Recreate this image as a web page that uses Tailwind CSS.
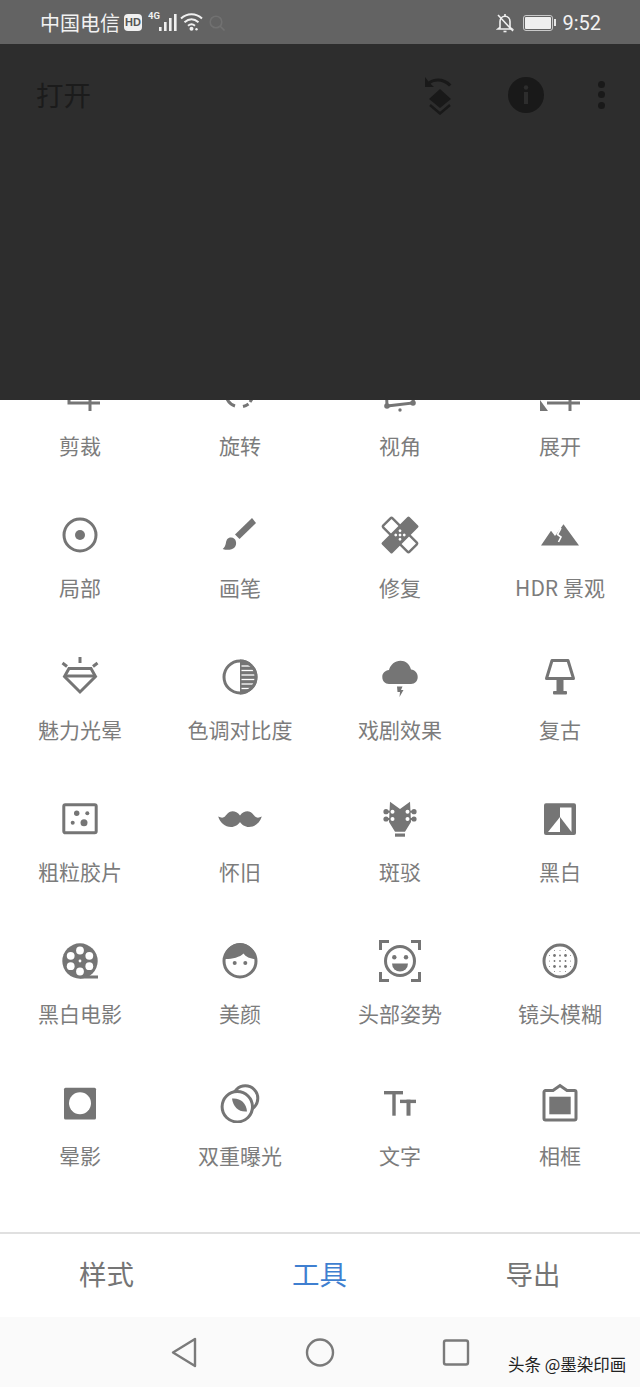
<!DOCTYPE html>
<html lang="zh-CN">
<head>
    <meta charset="UTF-8">
    <meta name="viewport" content="width=device-width, initial-scale=1.0">
    <script src="https://cdn.jsdelivr.net/npm/@tailwindcss/browser@4"></script>
    <title>Snapseed</title>
</head>
<body class="bg-white font-['Roboto','Noto_Sans_CJK_SC',sans-serif]">
<div class="w-[640px] h-[1387px] flex flex-col overflow-hidden">

    <!-- status bar -->
    <div class="h-[44px] bg-[#636363] flex items-center justify-between pl-[40px] pr-[39px] pt-[1px] text-[#f2f2f2]">
        <div class="flex items-center">
            <span class="text-[20px] leading-none font-['Noto_Sans_CJK_SC',sans-serif]">中国电信</span>
            <span class="ml-[4px] w-[18px] h-[17px] rounded-[4px] bg-[#f0f0f0] text-[#555555] text-[11px] font-bold leading-[17px] text-center font-['Liberation_Sans',sans-serif]">HD</span>
            <svg class="ml-[6px] -mt-[2px]" width="32" height="22" viewBox="0 0 32 22">
                <text x="0" y="8" font-size="9.5" font-weight="700" fill="#f0f0f0" font-family="Roboto">4G</text>
                <g fill="#f0f0f0"><rect x="11" y="16" width="2.6" height="4"/><rect x="16" y="11" width="2.6" height="9"/><rect x="21" y="7" width="2.6" height="13"/><rect x="26" y="3" width="2.6" height="17"/></g>
            </svg>
            <svg class="ml-[0px] -mt-[2px]" width="24" height="20" viewBox="0 0 24 20" fill="none" stroke="#f0f0f0" stroke-width="2">
                <path d="M1 6.5C7 0.8 16 0.8 22 6.5"/><path d="M4.5 10.2C9 6.3 14 6.3 18.5 10.2"/><path d="M8 13.7C10.4 11.8 12.6 11.8 15 13.7"/>
                <circle cx="11.5" cy="16.8" r="2" fill="#f0f0f0" stroke="none"/><circle cx="16.5" cy="17.3" r="1.2" fill="#f0f0f0" stroke="none"/>
            </svg>
            <svg class="ml-[4px]" width="18" height="18" viewBox="0 0 18 18" fill="none" stroke="#717171" stroke-width="1.6"><circle cx="8" cy="8" r="5.8"/><path d="M12 12l4.5 4.5"/></svg>
        </div>
        <div class="flex items-center">
            <svg class="-ml-[1px]" width="18" height="20" viewBox="0 0 18 20" fill="none" stroke="#f0f0f0" stroke-width="1.6">
                <path d="M4 14.5V8.5C4 5.5 6 3.2 9 3.2C12 3.2 14 5.5 14 8.5V14.5L16 16H2L4 14.5Z"/><path d="M7.5 18.5H10.5"/><path d="M9 1V3"/><path d="M2 2L17 18"/>
            </svg>
            <div class="ml-[9px] w-[30px] h-[16px] rounded-[3px] border border-[#c9c9c9] p-[1px]"><div class="w-full h-full bg-[#efefef] rounded-[1px]"></div></div>
            <div class="ml-[1px] w-[2px] h-[7px] bg-[#e6e6e6]"></div>
            <span class="ml-[6px] text-[20px] leading-none">9:52</span>
        </div>
    </div>

    <!-- dimmed top bar + image area -->
    <div class="h-[356px] bg-[#2d2d2d]">
        <div class="h-[101px] flex items-center justify-between pl-[36px] pr-[35px]">
            <span class="text-[27.5px] leading-none text-[#1b1b1b] font-['Noto_Sans_CJK_SC',sans-serif]">打开</span>
            <div class="flex items-center">
                <svg width="30" height="40" viewBox="0 0 30 40" fill="#191919">
                    <path d="M1 2L1 12L10 12L6.5 8.8C11 5.5 19 5.5 25 11.5L27.5 9.5C21 2.5 11 2 4.5 6.5Z"/>
                    <path d="M16 14L27 24L16 33L5 24Z"/>
                    <path d="M6 30L16 38.5L26 30" fill="none" stroke="#191919" stroke-width="2.5"/>
                </svg>
                <svg class="ml-[54px]" width="36" height="36" viewBox="0 0 36 36"><circle cx="18" cy="18" r="18" fill="#191919"/><rect x="16" y="15" width="4" height="12" fill="#2d2d2d"/><circle cx="18" cy="10.5" r="2.2" fill="#2d2d2d"/></svg>
                <div class="ml-[54px] flex flex-col gap-[3.5px]">
                    <div class="w-[7px] h-[7px] rounded-full bg-[#191919]"></div>
                    <div class="w-[7px] h-[7px] rounded-full bg-[#191919]"></div>
                    <div class="w-[7px] h-[7px] rounded-full bg-[#191919]"></div>
                </div>
            </div>
        </div>
    </div>

    <!-- tool grid, scrolled so the first row is cut off -->
    <div class="h-[832px] overflow-hidden bg-white">
        <div class="-mt-[27px] grid grid-cols-4 auto-rows-[142px] text-[21px] leading-[28px] text-[#7c7c7c] font-['Noto_Sans_CJK_SC',sans-serif]">

            <div class="flex flex-col items-center">
                <svg class="overflow-visible" width="40" height="40" viewBox="0 0 40 40" fill="none" stroke="#757575" stroke-width="3"><path d="M9 0V30H40"/><path d="M30 10V38"/></svg>
                <span class="mt-[18px]">剪裁</span>
            </div>
            <div class="flex flex-col items-center">
                <svg width="40" height="40" viewBox="0 0 40 40" fill="none" stroke="#757575" stroke-width="3"><path d="M7 26C9 30 12 32 15 33"/><path d="M23 33.5C25 33 27 32 28.5 31" /><path d="M30 29L32 26"/></svg>
                <span class="mt-[18px]">旋转</span>
            </div>
            <div class="flex flex-col items-center">
                <svg width="40" height="40" viewBox="0 0 40 40" fill="none" stroke="#757575" stroke-width="3"><path d="M6 8L7 33L33 30L35 8"/><circle cx="7" cy="33" r="2.8" fill="#757575" stroke="none"/><circle cx="33" cy="30" r="2.8" fill="#757575" stroke="none"/><circle cx="20" cy="37" r="1.7" fill="#757575" stroke="none"/></svg>
                <span class="mt-[18px]">视角</span>
            </div>
            <div class="flex flex-col items-center">
                <svg width="40" height="40" viewBox="0 0 40 40" fill="none" stroke="#757575" stroke-width="3"><path d="M7 30H40"/><path d="M30 10V38"/><path d="M0 38V27L8 38Z" fill="#757575" stroke="none"/></svg>
                <span class="mt-[18px]">展开</span>
            </div>

            <div class="flex flex-col items-center">
                <svg width="40" height="40" viewBox="0 0 40 40"><circle cx="20" cy="20" r="16" fill="none" stroke="#757575" stroke-width="3"/><circle cx="20" cy="20" r="5" fill="#757575"/></svg>
                <span class="mt-[18px]">局部</span>
            </div>
            <div class="flex flex-col items-center">
                <svg width="40" height="40" viewBox="0 0 40 40" fill="#757575"><path d="M32 3L36 8L19.5 24L15 19.5Z"/><path d="M11 22.5C7.5 22.5 6.5 25 6 27.5C5.7 30 4.5 32.5 2.7 34C7 35.5 12 35 14.5 32.5C17.5 29.5 16.5 22.5 11 22.5Z"/></svg>
                <span class="mt-[18px]">画笔</span>
            </div>
            <div class="flex flex-col items-center">
                <svg width="40" height="40" viewBox="0 0 40 40">
                    <g transform="rotate(45 20 20)">
                        <rect x="1.5" y="13.5" width="37" height="13" rx="1.5" fill="#fff" stroke="#757575" stroke-width="2.4"/>
                        <rect x="12.5" y="0.5" width="15" height="39" rx="1.5" fill="#757575"/>
                        <g fill="#fff"><circle cx="17" cy="17" r="1.4"/><circle cx="23" cy="17" r="1.4"/><circle cx="17" cy="23" r="1.4"/><circle cx="23" cy="23" r="1.4"/><circle cx="20" cy="20" r="1.4"/></g>
                    </g>
                </svg>
                <span class="mt-[18px]">修复</span>
            </div>
            <div class="flex flex-col items-center">
                <svg width="40" height="40" viewBox="0 0 40 40"><path d="M1 30.5L11 15.7L15 21L23.5 9.3L39 30.5Z" fill="#757575"/><path d="M21 13L17.5 19.5L21 22L18.5 27" fill="none" stroke="#fff" stroke-width="1.6"/></svg>
                <span class="mt-[18px]">HDR 景观</span>
            </div>

            <div class="flex flex-col items-center">
                <svg width="40" height="40" viewBox="0 0 40 40" fill="none" stroke="#757575" stroke-width="3"><path d="M20 0V6"/><path d="M2.5 6L7 9.5"/><path d="M37.5 6L33 9.5"/><path d="M9 11.5H31L35.5 19.5L20 35L4.5 19.5Z"/><path d="M5 19H35"/></svg>
                <span class="mt-[18px]">魅力光晕</span>
            </div>
            <div class="flex flex-col items-center">
                <svg width="40" height="40" viewBox="0 0 40 40">
                    <path d="M20 2.5A17.5 17.5 0 0 1 20 37.5Z" fill="#757575"/>
                    <g stroke="#fff" stroke-width="1.3"><path d="M21.5 9H33"/><path d="M21.5 13.5H35"/><path d="M21.5 18H35"/><path d="M21.5 22.5H35"/><path d="M21.5 27H34"/><path d="M21.5 31.5H31"/></g>
                    <circle cx="20" cy="20" r="16" fill="none" stroke="#757575" stroke-width="3"/>
                </svg>
                <span class="mt-[18px]">色调对比度</span>
            </div>
            <div class="flex flex-col items-center">
                <svg width="40" height="40" viewBox="0 0 40 40" fill="#757575"><path d="M9 27C5 27 2.3 24 2.3 20C2.3 16 5 13.5 9 13C10.5 7.5 15 3.7 20.5 3.7C25.5 3.7 29.5 7 31 12.5C35 13 37.7 16 37.7 20C37.7 24 35 27 31 27Z"/><path d="M17 29.5H22.5L21 33H23.5L19.5 40L20 35H17.5Z"/></svg>
                <span class="mt-[18px]">戏剧效果</span>
            </div>
            <div class="flex flex-col items-center">
                <svg width="40" height="40" viewBox="0 0 40 40"><path d="M12 3.5H28L33.5 21.5H6.5Z" fill="none" stroke="#757575" stroke-width="3" stroke-linejoin="round"/><rect x="16.5" y="23" width="7" height="12" fill="#757575"/><rect x="13" y="34" width="14" height="3.4" rx="1" fill="#757575"/></svg>
                <span class="mt-[18px]">复古</span>
            </div>

            <div class="flex flex-col items-center">
                <svg width="40" height="40" viewBox="0 0 40 40"><rect x="3.8" y="5.8" width="32.4" height="28" rx="1.5" fill="none" stroke="#757575" stroke-width="3"/><g fill="#757575"><circle cx="16.7" cy="14.3" r="2.7"/><circle cx="27.3" cy="14.3" r="2"/><circle cx="12.7" cy="23.7" r="2"/><circle cx="24" cy="23.7" r="3.5"/></g></svg>
                <span class="mt-[18px]">粗粒胶片</span>
            </div>
            <div class="flex flex-col items-center">
                <svg class="overflow-visible" width="40" height="40" viewBox="0 0 40 40" fill="#757575"><path d="M20 16.5C18 13.5 15 12.2 12.5 12.2C9 12.2 7 15 5 17.5C3.5 19 1 19 -1.8 17.5C0 23.5 5 28 11 28C15 28 18.5 25.5 20 23C21.5 25.5 25 28 29 28C35 28 40 23.5 41.8 17.5C39 19 36.5 19 35 17.5C33 15 31 12.2 27.5 12.2C25 12.2 22 13.5 20 16.5Z"/></svg>
                <span class="mt-[18px]">怀旧</span>
            </div>
            <div class="flex flex-col items-center">
                <svg width="40" height="40" viewBox="0 0 40 40" fill="#757575">
                    <path d="M10 2.7L20 10L30 2.7L31 23L25 32.7H15L9 23Z"/>
                    <rect x="15" y="34.5" width="10" height="3.2"/>
                    <circle cx="6" cy="12.7" r="2.6"/><circle cx="6" cy="20" r="2.6"/><circle cx="34" cy="12.7" r="2.6"/><circle cx="34" cy="20" r="2.6"/>
                    <rect x="6" y="11.7" width="5" height="2"/><rect x="6" y="19" width="5" height="2"/><rect x="29" y="11.7" width="5" height="2"/><rect x="29" y="19" width="5" height="2"/>
                    <g fill="#fff"><circle cx="12.5" cy="12.7" r="2"/><circle cx="12.5" cy="20" r="2"/><circle cx="27.5" cy="12.7" r="2"/><circle cx="27.5" cy="20" r="2"/></g>
                </svg>
                <span class="mt-[18px]">斑驳</span>
            </div>
            <div class="flex flex-col items-center">
                <svg width="40" height="40" viewBox="0 0 40 40"><rect x="4" y="4.3" width="32" height="31.7" rx="2" fill="#757575"/><path d="M20 8.5H31.5V33L20 18Z" fill="#fff"/><path d="M8 33H20V18Z" fill="#fff"/></svg>
                <span class="mt-[18px]">黑白</span>
            </div>

            <div class="flex flex-col items-center">
                <svg width="40" height="40" viewBox="0 0 40 40">
                    <circle cx="20" cy="20" r="17.7" fill="#757575"/><rect x="20" y="34.5" width="18" height="3" fill="#757575"/>
                    <g fill="#fff"><circle cx="20" cy="9.5" r="3.9"/><circle cx="29.3" cy="14.8" r="3.9"/><circle cx="29.3" cy="25.2" r="3.9"/><circle cx="20" cy="30.5" r="3.9"/><circle cx="10.7" cy="25.2" r="3.9"/><circle cx="10.7" cy="14.8" r="3.9"/><circle cx="20" cy="20" r="1.4"/></g>
                </svg>
                <span class="mt-[18px]">黑白电影</span>
            </div>
            <div class="flex flex-col items-center">
                <svg width="40" height="40" viewBox="0 0 40 40"><path d="M4 18A16 16 0 0 1 36 18C30 18 25.5 15.5 23.5 12.5C20 16.5 10 18.5 4 18Z" fill="#757575"/><circle cx="20" cy="20" r="16" fill="none" stroke="#757575" stroke-width="3"/><circle cx="14.7" cy="22" r="2" fill="#757575"/><circle cx="25.3" cy="22" r="2" fill="#757575"/></svg>
                <span class="mt-[18px]">美颜</span>
            </div>
            <div class="flex flex-col items-center">
                <svg class="overflow-visible" width="40" height="40" viewBox="0 0 40 40" fill="none" stroke="#757575" stroke-width="3">
                    <path d="M9 .5H.5V9"/><path d="M31 .5H39.5V9"/><path d="M.5 31V39.5H9"/><path d="M39.5 31V39.5H31"/>
                    <circle cx="20" cy="20" r="14.5"/>
                    <circle cx="14.3" cy="16.3" r="2.2" fill="#757575" stroke="none"/><circle cx="26" cy="16.3" r="2.2" fill="#757575" stroke="none"/>
                    <path d="M12 22.5H28A8 8 0 0 1 12 22.5Z" fill="#757575" stroke="none"/>
                </svg>
                <span class="mt-[18px]">头部姿势</span>
            </div>
            <div class="flex flex-col items-center">
                <svg width="40" height="40" viewBox="0 0 40 40" fill="#757575">
                    <circle cx="20" cy="20" r="16" fill="none" stroke="#757575" stroke-width="3"/>
                    <circle cx="14.5" cy="14.5" r="1.4"/><circle cx="25.5" cy="14.5" r="1.4"/><circle cx="14.5" cy="25.5" r="1.4"/><circle cx="25.5" cy="25.5" r="1.4"/>
                    <circle cx="20" cy="14.5" r=".9"/><circle cx="20" cy="25.5" r=".9"/><circle cx="14.5" cy="20" r=".9"/><circle cx="25.5" cy="20" r=".9"/><circle cx="20" cy="20" r=".9"/>
                    <circle cx="14.5" cy="9.5" r=".5"/><circle cx="20" cy="9.5" r=".5"/><circle cx="25.5" cy="9.5" r=".5"/><circle cx="14.5" cy="30.5" r=".5"/><circle cx="20" cy="30.5" r=".5"/><circle cx="25.5" cy="30.5" r=".5"/>
                    <circle cx="9.5" cy="14.5" r=".5"/><circle cx="9.5" cy="20" r=".5"/><circle cx="9.5" cy="25.5" r=".5"/><circle cx="30.5" cy="14.5" r=".5"/><circle cx="30.5" cy="20" r=".5"/><circle cx="30.5" cy="25.5" r=".5"/>
                </svg>
                <span class="mt-[18px]">镜头模糊</span>
            </div>

            <div class="flex flex-col items-center">
                <svg width="40" height="40" viewBox="0 0 40 40"><rect x="4" y="4.7" width="32" height="31.7" rx="1.5" fill="#757575"/><circle cx="20" cy="20.3" r="11" fill="#fff"/></svg>
                <span class="mt-[18px]">晕影</span>
            </div>
            <div class="flex flex-col items-center">
                <svg width="40" height="40" viewBox="0 0 40 40"><circle cx="25.3" cy="15.3" r="12.5" fill="none" stroke="#757575" stroke-width="3"/><circle cx="17.3" cy="23.7" r="15.2" fill="#fff" stroke="#757575" stroke-width="3"/><path d="M12 15.5C20 14.5 26.5 20 27 28.5C19 29.5 13 24 12 15.5Z" fill="#757575"/></svg>
                <span class="mt-[18px]">双重曝光</span>
            </div>
            <div class="flex flex-col items-center">
                <svg width="40" height="40" viewBox="0 0 40 40" fill="#757575"><rect x="4" y="8" width="19" height="3.4"/><rect x="12.3" y="8" width="3.4" height="24.7"/><rect x="20" y="16.7" width="16" height="3.4"/><rect x="26.5" y="16.7" width="4" height="16"/></svg>
                <span class="mt-[18px]">文字</span>
            </div>
            <div class="flex flex-col items-center">
                <svg width="40" height="40" viewBox="0 0 40 40"><path d="M5.5 7.5H13L20 2.5L27 7.5H34.5A1.5 1.5 0 0 1 36 9V35.5A1.5 1.5 0 0 1 34.5 37H5.5A1.5 1.5 0 0 1 4 35.5V9A1.5 1.5 0 0 1 5.5 7.5Z" fill="none" stroke="#757575" stroke-width="3"/><rect x="9.3" y="13.7" width="21.4" height="17.6" fill="#757575"/></svg>
                <span class="mt-[18px]">相框</span>
            </div>
        </div>
    </div>

    <!-- bottom tabs -->
    <div class="h-[85px] border-t-2 border-[#e0e0e0] bg-white flex items-center pb-[4px] text-[27.5px] leading-none font-['Noto_Sans_CJK_SC',sans-serif] text-[#757575]">
        <div class="w-[213px] text-center">样式</div>
        <div class="w-[213px] text-center text-[#3f7fd0]">工具</div>
        <div class="w-[214px] text-center">导出</div>
    </div>

    <!-- android nav bar -->
    <div class="relative h-[70px] bg-[#fafafa] flex items-center justify-center gap-[96px]">
        <svg width="40" height="40" viewBox="0 0 40 40" fill="none" stroke="#7a7a7a" stroke-width="2.4" stroke-linejoin="round"><path d="M31 7V34L9 20.5Z"/></svg>
        <svg width="40" height="40" viewBox="0 0 40 40" fill="none" stroke="#7a7a7a" stroke-width="2.4"><circle cx="20" cy="20.5" r="13"/></svg>
        <svg width="40" height="40" viewBox="0 0 40 40" fill="none" stroke="#7a7a7a" stroke-width="2.4"><rect x="8" y="8.5" width="24" height="24" rx="2"/></svg>
        <span class="absolute left-[508px] top-[39px] text-[16.5px] leading-none text-[#222222] font-['Noto_Sans_CJK_SC',sans-serif] whitespace-nowrap">头条 @墨染印画</span>
    </div>
</div>
</body>
</html>
